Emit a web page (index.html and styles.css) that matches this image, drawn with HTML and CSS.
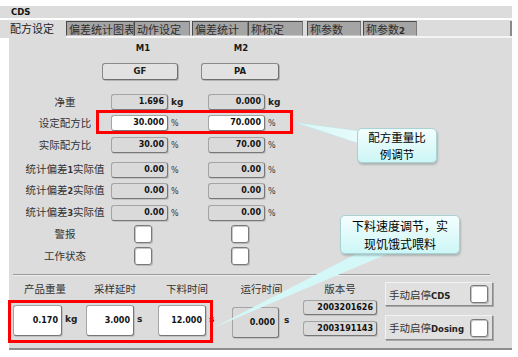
FILE: index.html
```html
<!DOCTYPE html>
<html lang="zh-CN">
<head>
<meta charset="utf-8">
<title>CDS</title>
<link rel="stylesheet" href="styles.css">
</head>
<body>
<div class="screen">
  <div class="title">CDS</div>
  <div class="tabs">
    <div class="tab active">配方设定</div>
    <div class="tab w68">偏差统计图表</div>
    <div class="tab w56">动作设定</div>
    <div class="tab w56 ml2">偏差统计</div>
    <div class="tab w55">称标定</div>
    <div class="tab w54 ml4">称参数</div>
    <div class="tab w54 ml2">称参数<b class="num">2</b></div>
    <div class="tab-fill"></div>
  </div>
  <div class="tabline"></div>

  <div class="content">
    <div class="mrow"><span class="m m1">M1</span><span class="m m2">M2</span></div>
    <div class="btnrow"><div class="mbtn gf">GF</div><div class="mbtn pa">PA</div></div>

    <div class="drow r1">
      <div class="lbl">净重</div>
      <div class="field">1.696</div><span class="unit bold">kg</span>
      <div class="field">0.000</div><span class="unit bold">kg</span>
    </div>
    <div class="drow r2">
      <div class="lbl">设定配方比</div>
      <div class="field white">30.000</div><span class="unit">%</span>
      <div class="field white">70.000</div><span class="unit">%</span>
    </div>
    <div class="drow r3">
      <div class="lbl">实际配方比</div>
      <div class="field">30.00</div><span class="unit">%</span>
      <div class="field">70.00</div><span class="unit">%</span>
    </div>
    <div class="drow r4">
      <div class="lbl">统计偏差<b class="num">1</b>实际值</div>
      <div class="field">0.00</div><span class="unit">%</span>
      <div class="field">0.00</div><span class="unit">%</span>
    </div>
    <div class="drow r5">
      <div class="lbl">统计偏差<b class="num">2</b>实际值</div>
      <div class="field">0.00</div><span class="unit">%</span>
      <div class="field">0.00</div><span class="unit">%</span>
    </div>
    <div class="drow r6">
      <div class="lbl">统计偏差<b class="num">3</b>实际值</div>
      <div class="field">0.00</div><span class="unit">%</span>
      <div class="field">0.00</div><span class="unit">%</span>
    </div>
    <div class="crow c1">
      <div class="lbl">警报</div>
      <div class="cb cb1"></div><div class="cb cb2"></div>
    </div>
    <div class="crow c2">
      <div class="lbl">工作状态</div>
      <div class="cb cb1"></div><div class="cb cb2"></div>
    </div>

    <div class="sep"></div>

    <div class="bottom">
      <div class="col ca">
        <div class="blbl">产品重量</div>
        <div class="bfield"><div class="bbox white">0.170</div><span class="bunit u-kg">kg</span></div>
      </div>
      <div class="col cbb">
        <div class="blbl">采样延时</div>
        <div class="bfield"><div class="bbox white w48">3.000</div><span class="bunit u-s">s</span></div>
      </div>
      <div class="col cc">
        <div class="blbl">下料时间</div>
        <div class="bfield"><div class="bbox white w48">12.000</div><span class="bunit u-s">s</span></div>
      </div>
      <div class="col cd">
        <div class="blbl">运行时间</div>
        <div class="bfield"><div class="bbox w47 low">0.000</div><span class="bunit u-s">s</span></div>
      </div>
      <div class="col ce">
        <div class="blbl">版本号</div>
        <div class="vbox v1">2003201626</div>
        <div class="vbox v2">2003191143</div>
      </div>
      <div class="col cf">
        <div class="sbtn s1"><span>手动启停<b class="num">CDS</b></span><div class="cb small"></div></div>
        <div class="sbtn s2"><span>手动启停<b class="num">Dosing</b></span><div class="cb small"></div></div>
      </div>
    </div>
    <div class="foot"></div>
  </div>

  <div class="redbox rb1"></div>
  <div class="redbox rb2"></div>

  <svg class="tails" width="518" height="357" viewBox="0 0 518 357">
    <defs>
      <linearGradient id="tg" x1="0" y1="0" x2="1" y2="0">
        <stop offset="0" stop-color="#d6f7f7"/>
        <stop offset="1" stop-color="#e8fbfb"/>
      </linearGradient>
    </defs>
    <polygon points="293,122 360,131 360,144" fill="url(#tg)" stroke="#bfe3e3" stroke-width="0.6"/>
    <polygon points="213,328 360,252 392,252" fill="#d4f8f8"/>
  </svg>

  <div class="callout k1"><span class="cline">配方重量比</span><span class="cline">例调节</span></div>
  <div class="callout k2"><span class="cline">下料速度调节，实</span><span class="cline">现饥饿式喂料</span></div>
</div>
</body>
</html>
```

FILE: styles.css
```css
* { box-sizing: border-box; }
html, body { margin: 0; padding: 0; background: #ffffff; }
body { width: 518px; height: 357px; overflow: hidden; }

.screen {
  position: relative;
  width: 518px;
  height: 357px;
  padding-top: 6px;
  font-family: "Noto Sans CJK SC", "DejaVu Sans", sans-serif;
  color: #2a2a2a;
}

.num { font-family: "DejaVu Sans", sans-serif; font-weight: bold; }

.title {
  width: 512px;
  height: 12px;
  background: #dcdcdc;
  padding-left: 11px;
  font-family: "DejaVu Sans", sans-serif;
  font-weight: bold;
  font-size: 8.5px;
  line-height: 12px;
  color: #111;
}

.tabs {
  width: 512px;
  height: 16px;
  margin-top: 2px;
  background: #dcdcdc;
  display: flex;
  align-items: flex-start;
}
.tab {
  height: 15px;
  margin-top: 1px;
  font-size: 11px;
  line-height: 14px;
  padding-left: 2px;
  white-space: nowrap;
  overflow: hidden;
  color: #2e2e2e;
}
.tab .num { font-size: 8.5px; }
.tab.active {
  width: 66px;
  padding-left: 10px;
  background: #dcdcdc;
  color: #222;
}
.tab:not(.active) {
  background: #a5a5a5;
  border-top: 1px solid #4a4a4a;
  border-left: 1px solid #4a4a4a;
  border-right: 1px solid #7a7a7a;
  border-bottom: 1px solid #c8c8c8;
}
.w68 { width: 68px; }
.w56 { width: 56px; }
.w55 { width: 55px; }
.w54 { width: 54px; }
.ml2 { margin-left: 2px; }
.ml4 { margin-left: 4px; }
.tab-fill {
  flex: 1;
  height: 15px;
  margin-top: 1px;
  border-right: 2px solid #8a8a8a;
}

.tabline {
  width: 512px;
  height: 2px;
  background: linear-gradient(to right, #dcdcdc 66px, #f4f4f4 66px);
}

.content {
  margin-left: 9px;
  width: 503px;
  background: #dcdcdc;
  padding-top: 0;
}

.mrow {
  height: 20px;
  display: flex;
  align-items: center;
  font-family: "DejaVu Sans", sans-serif;
  font-weight: bold;
  font-size: 8.5px;
  color: #1a1a1a;
}
.m { width: 30px; text-align: center; }
.m1 { margin-left: 119px; }
.m2 { margin-left: 68px; }

.btnrow { display: flex; margin-top: 5px; height: 17px; }
.mbtn {
  height: 17px;
  background: #e2e2e2;
  border: 1px solid #8a8a8a;
  border-right-color: #6e6e6e;
  border-bottom-color: #6e6e6e;
  border-radius: 3px;
  box-shadow: 1px 1px 0 #b4b4b4;
  font-family: "DejaVu Sans", sans-serif;
  font-weight: bold;
  font-size: 8.5px;
  line-height: 15px;
  text-align: center;
  color: #1a1a1a;
}
.gf { margin-left: 93px; width: 76px; }
.pa { margin-left: 23px; width: 78px; }

.drow { display: flex; align-items: center; height: 16px; }
.r1 { margin-top: 14px; }
.r2 { margin-top: 5px; }
.r3 { margin-top: 6px; }
.r4 { margin-top: 9px; }
.r5 { margin-top: 5px; }
.r6 { margin-top: 6px; }

.lbl {
  width: 102px;
  padding-left: 10px;
  text-align: center;
  font-size: 10.5px;
  line-height: 16px;
  color: #333;
  white-space: nowrap;
}
.lbl .num { font-size: 8px; }

.field {
  width: 57px;
  height: 16px;
  background: #dadada;
  border: 1px solid #a4a4a4;
  border-right-color: #777;
  border-bottom-color: #777;
  border-radius: 3px;
  box-shadow: 1px 1px 0 #c2c2c2;
  font-family: "DejaVu Sans", sans-serif;
  font-weight: bold;
  font-size: 8px;
  line-height: 14px;
  text-align: right;
  padding-right: 3px;
  color: #111;
}
.field.white, .bbox.white { background: #ffffff; }
.unit {
  width: 40px;
  padding-left: 3px;
  font-family: "DejaVu Sans", sans-serif;
  font-size: 8px;
  color: #333;
}
.unit.bold { font-weight: bold; font-size: 9px; color: #222; }

.crow { display: flex; align-items: center; height: 18px; }
.c1 { margin-top: 4px; }
.c2 { margin-top: 4px; }
.cb {
  width: 18px;
  height: 18px;
  background: #ffffff;
  border: 1px solid #7a7a7a;
  border-radius: 3px;
  box-shadow: inset 1px 1px 0 #c8c8c8, 1px 1px 0 #b8b8b8;
}
.cb1 { margin-left: 23px; }
.cb2 { margin-left: 79px; }

.sep {
  margin-top: 9px;
  margin-left: 4px;
  width: 477px;
  height: 2px;
  border-top: 1px solid #9a9a9a;
  border-bottom: 1px solid #eeeeee;
}

.bottom { display: flex; align-items: flex-start; height: 67px; }
.col { display: flex; flex-direction: column; padding-top: 6px; }
.ca { margin-left: 4px; }
.cbb { margin-left: 9px; }
.cc { margin-left: 14px; }
.cd { margin-left: 16px; }
.ce { margin-left: 12px; width: 74px; }
.cf { margin-left: 8px; width: 108px; }

.blbl {
  height: 14px;
  text-align: center;
  font-size: 10.5px;
  line-height: 14px;
  color: #333;
  white-space: nowrap;
}
.bfield { display: flex; align-items: center; margin-top: 9px; }
.bbox {
  width: 49px;
  height: 31px;
  background: #dadada;
  border: 1px solid #a4a4a4;
  border-right-color: #777;
  border-bottom-color: #777;
  border-radius: 3px;
  box-shadow: 1px 1px 0 #c2c2c2;
  font-family: "DejaVu Sans", sans-serif;
  font-weight: bold;
  font-size: 8px;
  line-height: 29px;
  text-align: right;
  padding-right: 3px;
  color: #111;
}
.bbox.w48 { width: 48px; }
.bbox.w47 { width: 47px; }
.bbox.low { margin-top: 2px; }
.bunit {
  font-family: "DejaVu Sans", sans-serif;
  font-weight: bold;
  font-size: 9px;
  color: #222;
  margin-bottom: 3px;
}
.u-kg { width: 15px; padding-left: 3px; }
.u-s { width: 10px; padding-left: 3px; }
.cd .u-s { width: 12px; padding-left: 5px; }

.vbox {
  width: 74px;
  height: 15px;
  background: #dadada;
  border: 1px solid #a4a4a4;
  border-right-color: #777;
  border-bottom-color: #777;
  border-radius: 3px;
  box-shadow: 1px 1px 0 #c2c2c2;
  font-family: "DejaVu Sans", sans-serif;
  font-weight: bold;
  font-size: 8px;
  line-height: 13px;
  text-align: right;
  padding-right: 3px;
  color: #111;
}
.v1 { margin-top: 4px; }
.v2 { margin-top: 6px; }

.sbtn {
  height: 24px;
  display: flex;
  align-items: center;
  justify-content: space-between;
  background: #e0e0e0;
  border: 1px solid #f2f2f2;
  border-right-color: #8a8a8a;
  border-bottom-color: #8a8a8a;
  box-shadow: 1px 1px 0 #a8a8a8;
  padding-left: 3px;
  padding-right: 4px;
  font-size: 10.5px;
  color: #333;
  white-space: nowrap;
}
.sbtn .num { font-size: 8.5px; color: #222; }
.s2 { margin-top: 9px; height: 25px; }
.cb.small { width: 18px; height: 18px; }

.foot {
  height: 7px;
  border-bottom: 2px solid #8e8e8e;
}

.redbox {
  position: absolute;
  border: 3px solid #ff0000;
  z-index: 4;
}
.rb1 { left: 96px; top: 110px; width: 197px; height: 24px; }
.rb2 { left: 8px; top: 300px; width: 205px; height: 43px; }

.tails { position: absolute; left: 0; top: 0; z-index: 5; }

.callout {
  position: absolute;
  z-index: 6;
  border: 1px solid #a9d2d4;
  border-radius: 5px;
  background: linear-gradient(#f4fefe, #cdf6f6);
  box-shadow: 1px 2px 2px rgba(90, 110, 110, 0.35);
  font-family: "Noto Sans CJK SC", sans-serif;
  color: #000;
  text-align: center;
  display: flex;
  flex-direction: column;
  align-items: center;
  justify-content: center;
}
.cline { display: block; white-space: nowrap; }
.k1 { left: 357px; top: 128px; width: 80px; height: 35px; font-size: 11.5px; }
.k1 .cline { height: 16.7px; line-height: 16.7px; }
.k2 { left: 340px; top: 215px; width: 120px; height: 39px; font-size: 12px; }
.k2 .cline { height: 17.4px; line-height: 17.4px; }
```
